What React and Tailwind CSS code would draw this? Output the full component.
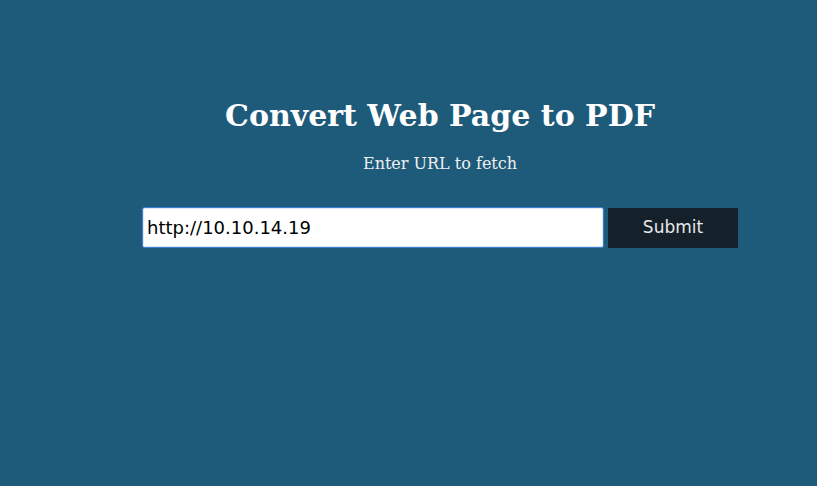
import React, { useState } from 'react';

export default function App() {
    const [url, setUrl] = useState('http://10.10.14.19');

    return (
        <div className="min-h-[486px] w-full bg-[#1e5b7b]">
            <div className="pl-[63px] pt-[96px] flex flex-col items-center">
                <h1 className="text-[30px] leading-[40px] font-bold text-white font-['DejaVu_Serif',serif]">
                    Convert Web Page to PDF
                </h1>
                <p className="mt-[18px] text-[16px] leading-[20px] text-[#f0f0f0] font-['DejaVu_Serif',serif]">
                    Enter URL to fetch
                </p>
                <form className="mt-[33px] flex items-center gap-[4px]" onSubmit={e => e.preventDefault()}>
                    <input
                        autoFocus
                        className="w-[462px] h-[41px] rounded-[3px] border border-[#3b7fd4] bg-white px-[4px] text-[18px] text-black font-['DejaVu_Sans',sans-serif] outline outline-1 outline-[#dfe8f2] -outline-offset-2"
                        value={url}
                        onChange={e => setUrl(e.target.value)}
                    />
                    <button
                        type="submit"
                        className="w-[130px] h-[40px] bg-[#14202a] text-[17px] text-[#e8e8e8] font-['DejaVu_Sans',sans-serif]"
                    >
                        Submit
                    </button>
                </form>
            </div>
        </div>
    );
}
